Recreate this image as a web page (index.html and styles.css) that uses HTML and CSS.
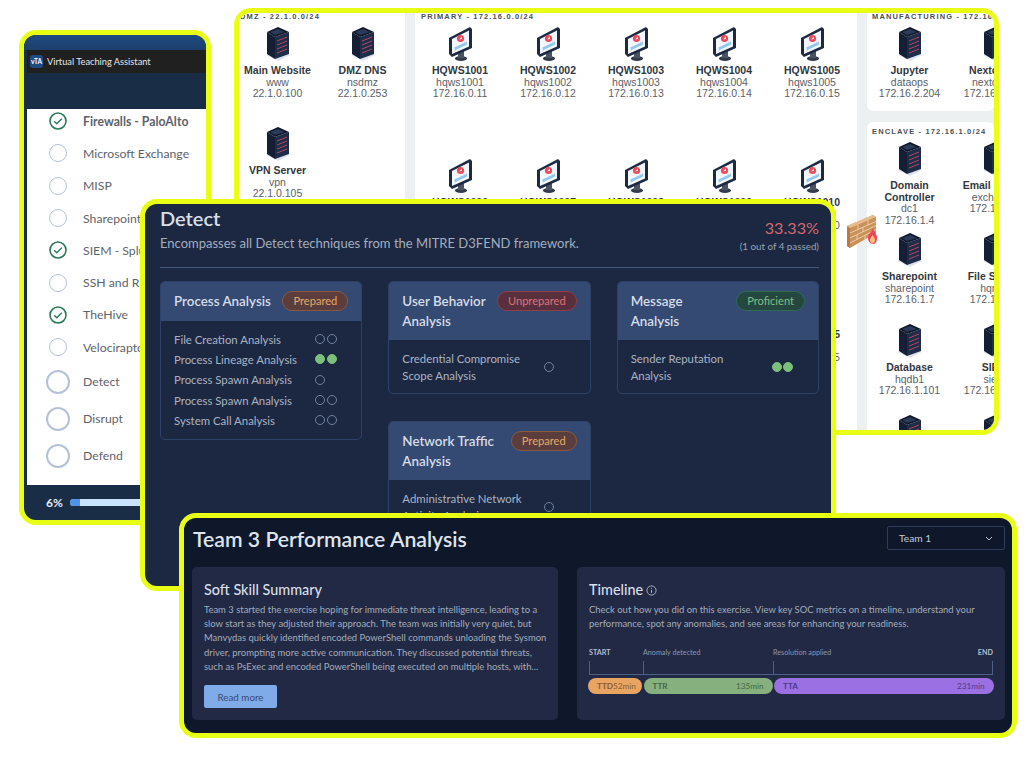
FILE: index.html
```html
<!DOCTYPE html>
<html lang="en">
<head>
    <meta charset="UTF-8">
    <meta name="viewport" content="width=device-width, initial-scale=1.0">
    <title>Exercise Overview</title>
    <link rel="stylesheet" href="styles.css">
</head>
<body>
    <svg class="icon-defs" aria-hidden="true">
        <symbol id="server" viewBox="0 0 24 34">
            <polygon points="12,34 24,28 12,22 0,28" fill="#dfe3ee"/>
            <polygon points="1,5 9,10 9,32 1,27" fill="#141f36"/>
            <polygon points="9,10 23,5 23,27 9,32" fill="#1e2d4a"/>
            <polygon points="12,0 23,5 9,10 1,5" fill="#0f1829"/>
            <polygon points="12,2 19,5 9,8 4,5" fill="#2a3a58"/>
            <g stroke="#c9485c" stroke-width="0.9">
                <line x1="11" y1="14" x2="21" y2="10"/>
                <line x1="11" y1="18" x2="21" y2="14"/>
                <line x1="11" y1="22" x2="21" y2="18"/>
                <line x1="11" y1="26" x2="21" y2="22"/>
            </g>
        </symbol>
        <symbol id="monitor" viewBox="0 0 24 34">
            <ellipse cx="13" cy="31.5" rx="6" ry="2.4" fill="#333a48"/>
            <polygon points="10,26 16,24 16,31 10,31" fill="#4a5364"/>
            <polygon points="1,11 22,0 24,2 24,21 4,30 1,27" fill="#1c2a44"/>
            <polygon points="4,12 21,3.5 21,19.5 4,27" fill="#f3f6fb"/>
            <circle cx="12.5" cy="11.5" r="3.6" fill="#ee4a5c"/>
            <polygon points="11.5,12.5 13.5,9.5 14,12" fill="#ffffff"/>
            <polygon points="6.5,20.5 19,14.5 19,17.5 6.5,23.5" fill="#8fc8f2"/>
        </symbol>
    </svg>

    <section class="window network">
        <div class="net-col net-dmz">
            <h4 class="zone-title">DMZ - 22.1.0.0/24</h4>
            <div class="node-grid dmz-grid">
                <div class="node"><svg class="node-icon"><use href="#server"/></svg><b>Main Website</b><span>www</span><span>22.1.0.100</span></div>
                <div class="node"><svg class="node-icon"><use href="#server"/></svg><b>DMZ DNS</b><span>nsdmz</span><span>22.1.0.253</span></div>
                <div class="node"><svg class="node-icon"><use href="#server"/></svg><b>VPN Server</b><span>vpn</span><span>22.1.0.105</span></div>
            </div>
        </div>
        <div class="net-col net-primary">
            <h4 class="zone-title">PRIMARY - 172.16.0.0/24</h4>
            <div class="node-grid primary-grid">
                <div class="node"><svg class="node-icon"><use href="#monitor"/></svg><b>HQWS1001</b><span>hqws1001</span><span>172.16.0.11</span></div>
                <div class="node"><svg class="node-icon"><use href="#monitor"/></svg><b>HQWS1002</b><span>hqws1002</span><span>172.16.0.12</span></div>
                <div class="node"><svg class="node-icon"><use href="#monitor"/></svg><b>HQWS1003</b><span>hqws1003</span><span>172.16.0.13</span></div>
                <div class="node"><svg class="node-icon"><use href="#monitor"/></svg><b>HQWS1004</b><span>hqws1004</span><span>172.16.0.14</span></div>
                <div class="node"><svg class="node-icon"><use href="#monitor"/></svg><b>HQWS1005</b><span>hqws1005</span><span>172.16.0.15</span></div>
                <div class="node"><svg class="node-icon"><use href="#monitor"/></svg><b>HQWS1006</b><span>hqws1006</span><span>172.16.0.16</span></div>
                <div class="node"><svg class="node-icon"><use href="#monitor"/></svg><b>HQWS1007</b><span>hqws1007</span><span>172.16.0.17</span></div>
                <div class="node"><svg class="node-icon"><use href="#monitor"/></svg><b>HQWS1008</b><span>hqws1008</span><span>172.16.0.18</span></div>
                <div class="node"><svg class="node-icon"><use href="#monitor"/></svg><b>HQWS1009</b><span>hqws1009</span><span>172.16.0.19</span></div>
                <div class="node"><svg class="node-icon"><use href="#monitor"/></svg><b>HQWS1010</b><span>hqws1010</span><span>172.16.0.20</span></div>
                <div class="node"><svg class="node-icon"><use href="#monitor"/></svg><b>HQWS1011</b><span>hqws1011</span><span>172.16.0.21</span></div>
                <div class="node"><svg class="node-icon"><use href="#monitor"/></svg><b>HQWS1012</b><span>hqws1012</span><span>172.16.0.22</span></div>
                <div class="node"><svg class="node-icon"><use href="#monitor"/></svg><b>HQWS1013</b><span>hqws1013</span><span>172.16.0.23</span></div>
                <div class="node"><svg class="node-icon"><use href="#monitor"/></svg><b>HQWS1014</b><span>hqws1014</span><span>172.16.0.24</span></div>
                <div class="node"><svg class="node-icon"><use href="#monitor"/></svg><b>HQWS1015</b><span>hqws1015</span><span>172.16.0.25</span></div>
            </div>
        </div>
        <div class="net-side">
            <div class="zone-card zone-mfg">
                <h4 class="zone-title">MANUFACTURING - 172.16.2.0/24</h4>
                <div class="node-grid side-grid">
                    <div class="node"><svg class="node-icon"><use href="#server"/></svg><b>Jupyter</b><span>dataops</span><span>172.16.2.204</span></div>
                    <div class="node"><svg class="node-icon"><use href="#server"/></svg><b>Nextcloud</b><span>nextcloud</span><span>172.16.2.205</span></div>
                </div>
            </div>
            <div class="zone-card zone-enclave">
                <h4 class="zone-title">ENCLAVE - 172.16.1.0/24</h4>
                <div class="node-grid side-grid">
                    <div class="node"><svg class="node-icon"><use href="#server"/></svg><b>Domain Controller</b><span>dc1</span><span>172.16.1.4</span></div>
                    <div class="node"><svg class="node-icon"><use href="#server"/></svg><b>Email Server</b><span>exchange</span><span>172.16.1.5</span></div>
                    <div class="node"><svg class="node-icon"><use href="#server"/></svg><b>Sharepoint</b><span>sharepoint</span><span>172.16.1.7</span></div>
                    <div class="node"><svg class="node-icon"><use href="#server"/></svg><b>File Server</b><span>hqnas</span><span>172.16.1.8</span></div>
                    <div class="node"><svg class="node-icon"><use href="#server"/></svg><b>Database</b><span>hqdb1</span><span>172.16.1.101</span></div>
                    <div class="node"><svg class="node-icon"><use href="#server"/></svg><b>SIEM</b><span>siem</span><span>172.16.1.102</span></div>
                    <div class="node"><svg class="node-icon"><use href="#server"/></svg><b>Backup</b><span>backup</span><span>172.16.1.103</span></div>
                    <div class="node"><svg class="node-icon"><use href="#server"/></svg><b>Logs</b><span>logs</span><span>172.16.1.104</span></div>
                </div>
            </div>
        </div>
        <svg class="firewall" viewBox="0 0 30 36" aria-hidden="true">
            <polygon points="0,11 26,0 29,2 29,18 3,33 0,31" fill="#cb9159"/>
            <polygon points="0,11 3,13 3,33 0,31" fill="#b57a45"/>
            <polygon points="0,11 26,0 29,2 3,13" fill="#e6bd8f"/>
            <g stroke="#ecd6b6" stroke-width="0.9">
                <line x1="3" y1="18" x2="29" y2="6.5"/>
                <line x1="3" y1="23" x2="29" y2="10.5"/>
                <line x1="3" y1="28" x2="29" y2="14.5"/>
                <line x1="11" y1="9.5" x2="11" y2="14.5"/>
                <line x1="21" y1="5.5" x2="21" y2="10"/>
                <line x1="16" y1="12.5" x2="16" y2="17"/>
                <line x1="10" y1="20" x2="10" y2="24.5"/>
                <line x1="18" y1="20" x2="18" y2="25"/>
            </g>
            <path d="M26 13c-1 4-5 6-5 10 0 4 3 6 5 6s4-2 4-6c0-4-3-6-4-10z" fill="#ee4458"/>
            <path d="M25.500 20c-1 2-2.500 3-2.500 5s1.500 3.500 2.500 3.500 2.500-1.500 2.500-3.500-1.500-3-2.500-5z" fill="#ffc27a"/>
        </svg>
    </section>

    <section class="window vta">
        <div class="vta-top"></div>
        <div class="vta-title"><span class="vta-logo">vTA</span>Virtual Teaching Assistant</div>
        <div class="vta-band"></div>
        <div class="vta-list">
            <ul class="tasks">
                <li class="task done current"><svg class="mark" viewBox="0 0 18 18"><circle cx="9" cy="9" r="8" fill="none" stroke="#2c7a58" stroke-width="1.6"/><path d="M5.2 9.3l2.6 2.5 5-5" fill="none" stroke="#2c7a58" stroke-width="1.4"/></svg>Firewalls - PaloAlto</li>
                <li class="task"><span class="ring"></span>Microsoft Exchange</li>
                <li class="task"><span class="ring"></span>MISP</li>
                <li class="task"><span class="ring"></span>Sharepoint</li>
                <li class="task done"><svg class="mark" viewBox="0 0 18 18"><circle cx="9" cy="9" r="8" fill="none" stroke="#2c7a58" stroke-width="1.6"/><path d="M5.2 9.3l2.6 2.5 5-5" fill="none" stroke="#2c7a58" stroke-width="1.4"/></svg>SIEM - Splunk</li>
                <li class="task"><span class="ring"></span>SSH and RDP</li>
                <li class="task done"><svg class="mark" viewBox="0 0 18 18"><circle cx="9" cy="9" r="8" fill="none" stroke="#2c7a58" stroke-width="1.6"/><path d="M5.2 9.3l2.6 2.5 5-5" fill="none" stroke="#2c7a58" stroke-width="1.4"/></svg>TheHive</li>
                <li class="task"><span class="ring"></span>Velociraptor</li>
                <li class="task section"><span class="ring"></span>Detect</li>
                <li class="task section"><span class="ring"></span>Disrupt</li>
                <li class="task section"><span class="ring"></span>Defend</li>
            </ul>
        </div>
        <div class="vta-foot">
            <span class="percent">6%</span>
            <div class="progress"><div class="progress-fill"></div></div>
        </div>
    </section>

    <section class="window detect">
        <header class="detect-head">
            <div>
                <h2>Detect</h2>
                <p>Encompasses all Detect techniques from the MITRE D3FEND framework.</p>
            </div>
            <div class="score">
                <strong>33.33%</strong>
                <span>(1 out of 4 passed)</span>
            </div>
        </header>
        <div class="detect-grid">
            <div class="detect-col">
                <article class="skill">
                    <div class="skill-head"><h3>Process Analysis</h3><span class="badge prepared">Prepared</span></div>
                    <div class="skill-body">
                        <div class="skill-row"><span>File Creation Analysis</span><span class="dots"><i></i><i></i></span></div>
                        <div class="skill-row"><span>Process Lineage Analysis</span><span class="dots"><i class="on"></i><i class="on"></i></span></div>
                        <div class="skill-row"><span>Process Spawn Analysis</span><span class="dots"><i></i></span></div>
                        <div class="skill-row"><span>Process Spawn Analysis</span><span class="dots"><i></i><i></i></span></div>
                        <div class="skill-row"><span>System Call Analysis</span><span class="dots"><i></i><i></i></span></div>
                    </div>
                </article>
            </div>
            <div class="detect-col">
                <article class="skill">
                    <div class="skill-head"><h3>User Behavior Analysis</h3><span class="badge unprepared">Unprepared</span></div>
                    <div class="skill-body wide">
                        <div class="skill-row"><span>Credential Compromise Scope Analysis</span><span class="dots"><i></i></span></div>
                    </div>
                </article>
                <article class="skill">
                    <div class="skill-head"><h3>Network Traffic Analysis</h3><span class="badge prepared">Prepared</span></div>
                    <div class="skill-body wide">
                        <div class="skill-row"><span>Administrative Network Activity Analysis</span><span class="dots"><i></i></span></div>
                    </div>
                </article>
            </div>
            <div class="detect-col">
                <article class="skill">
                    <div class="skill-head"><h3>Message Analysis</h3><span class="badge proficient">Proficient</span></div>
                    <div class="skill-body wide">
                        <div class="skill-row"><span>Sender Reputation Analysis</span><span class="dots"><i class="on"></i><i class="on"></i></span></div>
                    </div>
                </article>
            </div>
        </div>
    </section>

    <section class="window team">
        <header class="team-head">
            <h1>Team 3 Performance Analysis</h1>
            <div class="team-select">Team 1
                <svg width="8" height="5" viewBox="0 0 8 5"><path d="M1 1l3 3 3-3" fill="none" stroke="#b8c0ce" stroke-width="1"/></svg>
            </div>
        </header>
        <div class="team-grid">
            <div class="panel">
                <h3>Soft Skill Summary</h3>
                <p>Team 3 started the exercise hoping for immediate threat intelligence, leading to a slow start as they adjusted their approach. The team was initially very quiet, but Manvydas quickly identified encoded PowerShell commands unloading the Sysmon driver, prompting more active communication. They discussed potential threats, such as PsExec and encoded PowerShell being executed on multiple hosts, with...</p>
                <button class="read-more">Read more</button>
            </div>
            <div class="panel">
                <h3>Timeline
                    <svg class="info" width="11" height="11" viewBox="0 0 12 12"><circle cx="6" cy="6" r="5" fill="none" stroke="#c3cad6" stroke-width="0.9"/><path d="M6 5.4v3.2M6 3.2v1" stroke="#c3cad6" stroke-width="1"/></svg>
                </h3>
                <p>Check out how you did on this exercise. View key SOC metrics on a timeline, understand your performance, spot any anomalies, and see areas for enhancing your readiness.</p>
                <div class="tl-labels">
                    <span class="strong">START</span>
                    <span>Anomaly detected</span>
                    <span class="tl-last">Resolution applied<span class="strong">END</span></span>
                </div>
                <div class="tl-ticks">
                    <div class="tick"></div>
                    <div class="tick"></div>
                    <div class="tick last"></div>
                </div>
                <div class="tl-bars">
                    <div class="tl-bar ttd"><b>TTD</b><span>52min</span></div>
                    <div class="tl-bar ttr"><b>TTR</b><span>135min</span></div>
                    <div class="tl-bar tta"><b>TTA</b><span>231min</span></div>
                </div>
            </div>
        </div>
    </section>
</body>
</html>
```

FILE: styles.css
```css
* {
    box-sizing: border-box;
}
html, body {
    margin: 0;
    padding: 0;
}
body {
    width: 1024px;
    height: 768px;
    overflow: hidden;
    position: relative;
    background-color: white;
    font-family: Lato, "Open Sans", sans-serif;
}
h1, h2, h3, h4, p, ul {
    margin: 0;
    padding: 0;
}
.icon-defs {
    position: absolute;
    width: 0;
    height: 0;
}

/* windows on the canvas */
.window {
    position: absolute;
    border: 5px solid #e9ff14;
    border-radius: 17px;
    overflow: hidden;
}
.network {
    left: 234px;
    top: 8px;
    width: 765px;
    height: 427px;
    display: flex;
    background-color: #ecf0f1;
}
.vta {
    left: 19px;
    top: 30px;
    width: 192px;
    height: 495px;
    background-color: #1a2d47;
}
.detect {
    left: 140px;
    top: 199px;
    width: 696px;
    height: 392px;
    padding: 2px 12px 0 15px;
    background-color: #1c2841;
}
.team {
    left: 179px;
    top: 513px;
    width: 838px;
    height: 225px;
    padding: 8px 7px 0 8px;
    background-color: #0f182b;
}

/* network map */
.net-col {
    background-color: white;
    flex-shrink: 0;
}
.net-dmz {
    width: 166px;
}
.net-primary {
    width: 442px;
    margin-left: 10px;
}
.net-side {
    width: 127px;
    margin-left: 10px;
    flex-shrink: 0;
    overflow: hidden;
}
.zone-title {
    font-family: "Liberation Sans", sans-serif;
    font-size: 7.5px;
    font-weight: bold;
    line-height: 6px;
    letter-spacing: 1.15px;
    color: #4a4f57;
    white-space: nowrap;
    padding-top: 1px;
    padding-left: 6px;
    margin-bottom: 7px;
}
.net-side .zone-title {
    padding-left: 5px;
}
.net-dmz .zone-title {
    margin-left: -5px;
}
.node-grid {
    display: grid;
    justify-content: start;
}
.dmz-grid {
    grid-template-columns: repeat(2, 85px);
    grid-auto-rows: 100px;
    margin-left: -4px;
}
.primary-grid {
    grid-template-columns: repeat(5, 88px);
    grid-auto-rows: 132px;
    margin-left: 1px;
}
.side-grid {
    grid-template-columns: repeat(2, 85px);
    grid-auto-rows: 91px;
}
.node {
    display: flex;
    flex-direction: column;
    align-items: center;
    text-align: center;
    font-family: "Liberation Sans", sans-serif;
    font-size: 10.5px;
    line-height: 11.7px;
    color: #5c6168;
}
.node b {
    color: #33373d;
}
.node-icon {
    width: 24px;
    height: 34px;
    margin-bottom: 4px;
}
.zone-card {
    background-color: white;
    border-radius: 0 0 6px 6px;
    overflow: hidden;
}
.zone-mfg {
    height: 98px;
    margin-bottom: 11px;
}
.zone-enclave {
    height: 320px;
    padding-top: 6px;
    border-radius: 6px;
}
.firewall {
    position: absolute;
    left: 608px;
    top: 202px;
    width: 30px;
    height: 36px;
}

/* teaching assistant */
.vta-top {
    height: 15px;
    background: linear-gradient(#1f4a80, #1c3f6d);
}
.vta-title {
    height: 23px;
    margin: 0 0 0 3px;
    padding-left: 3px;
    display: flex;
    align-items: center;
    gap: 4px;
    background-color: #202020;
    color: #e4e6e8;
    font-size: 9.25px;
}
.vta-logo {
    width: 13px;
    height: 13px;
    border-radius: 3px;
    background-color: #1f4b85;
    color: white;
    font-size: 6.5px;
    font-weight: bold;
    line-height: 13px;
    text-align: center;
}
.vta-band {
    height: 36px;
}
.vta-list {
    height: 376px;
    margin-left: 3px;
    background-color: white;
    overflow: hidden;
}
.tasks {
    list-style: none;
    margin-top: -4px;
}
.task {
    height: 32.3px;
    padding-left: 19px;
    display: flex;
    align-items: center;
    gap: 13px;
    font-size: 12.25px;
    color: #5e636b;
    white-space: nowrap;
}
.task.section {
    height: 37px;
}
.task.current {
    font-weight: bold;
}
.ring, .mark {
    width: 18px;
    height: 18px;
    margin: 0 3px;
    flex-shrink: 0;
}
.ring {
    border: 1.6px solid #b4c2d8;
    border-radius: 50%;
}
.section .ring {
    width: 24px;
    height: 24px;
    margin: 0;
    border-width: 2px;
}
.vta-foot {
    display: flex;
    align-items: center;
    height: 34px;
    padding-left: 22px;
    gap: 7px;
}
.percent {
    color: #e6ebf3;
    font-size: 12px;
    font-weight: bold;
}
.progress {
    width: 120px;
    height: 7px;
    border-radius: 4px;
    background-color: #c9e2fb;
    overflow: hidden;
}
.progress-fill {
    width: 10px;
    height: 100%;
    background-color: #4d94e8;
}

/* detect */
.detect-head {
    display: flex;
    justify-content: space-between;
    height: 62px;
    border-bottom: 1px solid #42557a;
}
.detect-head h2 {
    font-size: 20px;
    font-weight: 600;
    line-height: 26px;
    margin-top: -1px;
    color: #d9dfe9;
}
.detect-head p {
    margin-top: 2px;
    font-size: 13px;
    line-height: 20px;
    color: #a3adbf;
}
.score {
    padding-top: 12px;
    text-align: right;
}
.score strong {
    display: block;
    font-size: 16.2px;
    font-weight: 400;
    line-height: 20px;
    color: #d4686a;
}
.score span {
    display: block;
    margin-top: 2px;
    font-size: 9.8px;
    line-height: 12px;
    color: #98a3b6;
}
.detect-grid {
    display: grid;
    grid-template-columns: repeat(3, 1fr);
    column-gap: 26px;
    margin-top: 13px;
}
.detect-col {
    display: flex;
    flex-direction: column;
    gap: 27px;
}
.skill {
    border: 1px solid #2e4267;
    border-radius: 5px;
    overflow: hidden;
}
.skill-head {
    display: flex;
    justify-content: space-between;
    align-items: flex-start;
    gap: 6px;
    min-height: 39px;
    padding: 9px 13px 9px 13px;
    background-color: #344a72;
}
.skill-head h3 {
    font-size: 13.4px;
    font-weight: 600;
    line-height: 20px;
    color: #d6dde8;
}
.badge {
    flex-shrink: 0;
    padding: 0 10px;
    border: 1px solid;
    border-radius: 10px;
    font-size: 11.1px;
    line-height: 18px;
}
.prepared {
    background-color: #5a3d3c;
    border-color: #8a5a40;
    color: #e8a766;
}
.unprepared {
    background-color: #5a2f3d;
    border-color: #8c3f49;
    color: #dd7378;
}
.proficient {
    background-color: #24483f;
    border-color: #2f6b50;
    color: #85bb82;
}
.skill-body {
    padding: 8px 24px 9px 13px;
}
.skill-body.wide {
    padding-top: 10px;
}
.skill-row {
    display: flex;
    justify-content: space-between;
    align-items: center;
    min-height: 20.3px;
    font-size: 11.4px;
    color: #aab3c3;
}
.wide .skill-row {
    line-height: 17px;
}
.wide .skill-row > span:first-child {
    max-width: 130px;
}
.dots {
    width: 22px;
    flex-shrink: 0;
    display: flex;
    gap: 1.5px;
}
.dots i {
    width: 10px;
    height: 10px;
    border: 1px solid #71829f;
    border-radius: 50%;
}
.dots i.on {
    background-color: #7cc07a;
    border-color: #7cc07a;
}

/* team performance */
.team-head {
    display: flex;
    justify-content: space-between;
    align-items: center;
    height: 24px;
}
.team-head h1 {
    font-size: 21.2px;
    font-weight: 600;
    color: #dfe4ec;
    padding: 2px 0 0 1px;
}
.team-select {
    width: 118px;
    height: 24px;
    padding: 0 11px;
    display: flex;
    justify-content: space-between;
    align-items: center;
    border: 1px solid #2e3d5c;
    border-radius: 2px;
    font-size: 10.2px;
    color: #c3cad6;
}
.team-grid {
    display: grid;
    grid-template-columns: 366px 428px;
    column-gap: 19px;
    margin-top: 17px;
}
.panel {
    height: 153px;
    padding: 13px 7px 11px 12px;
    border-radius: 5px;
    background-color: #212944;
}
.panel h3 {
    display: flex;
    align-items: center;
    gap: 3px;
    font-size: 14.4px;
    font-weight: 500;
    line-height: 20px;
    color: #d9dfe9;
}
.panel p {
    margin-top: 3px;
    font-size: 9.45px;
    line-height: 14.2px;
    color: #a4acbc;
}
.read-more {
    display: block;
    width: 73px;
    height: 23px;
    margin-top: 11px;
    padding: 0;
    border: none;
    border-radius: 2px;
    background-color: #7fabe9;
    font-family: inherit;
    font-size: 9.8px;
    color: #3b4a6e;
}
.tl-labels {
    display: grid;
    grid-template-columns: 54px 130px 220px;
    margin-top: 17px;
    font-size: 7.2px;
    line-height: 10px;
    color: #8f97aa;
}
.tl-last {
    display: flex;
    justify-content: space-between;
}
.strong {
    color: #b6bdcb;
    font-weight: bold;
}
.tl-ticks {
    display: grid;
    grid-template-columns: 54px 130px 220px;
    margin-top: 3px;
}
.tick {
    height: 14px;
    border-left: 1px solid #4d5f85;
    border-bottom: 1px solid #4d5f85;
}
.tick.last {
    border-right: 1px solid #4d5f85;
}
.tl-bars {
    display: grid;
    grid-template-columns: 54px 129px 219.5px;
    column-gap: 1.5px;
    margin-top: 3px;
    margin-left: -1px;
    width: 405.5px;
}
.tl-bar {
    display: flex;
    justify-content: space-between;
    align-items: center;
    height: 16px;
    padding: 0 9px;
    border-radius: 8px;
    font-size: 8.2px;
}
.ttd {
    background-color: #e8a562;
    color: #8a5a35;
}
.ttr {
    background-color: #86b07e;
    color: #47664a;
}
.tta {
    background-color: #9b70e2;
    color: #4d3a8a;
}
```
